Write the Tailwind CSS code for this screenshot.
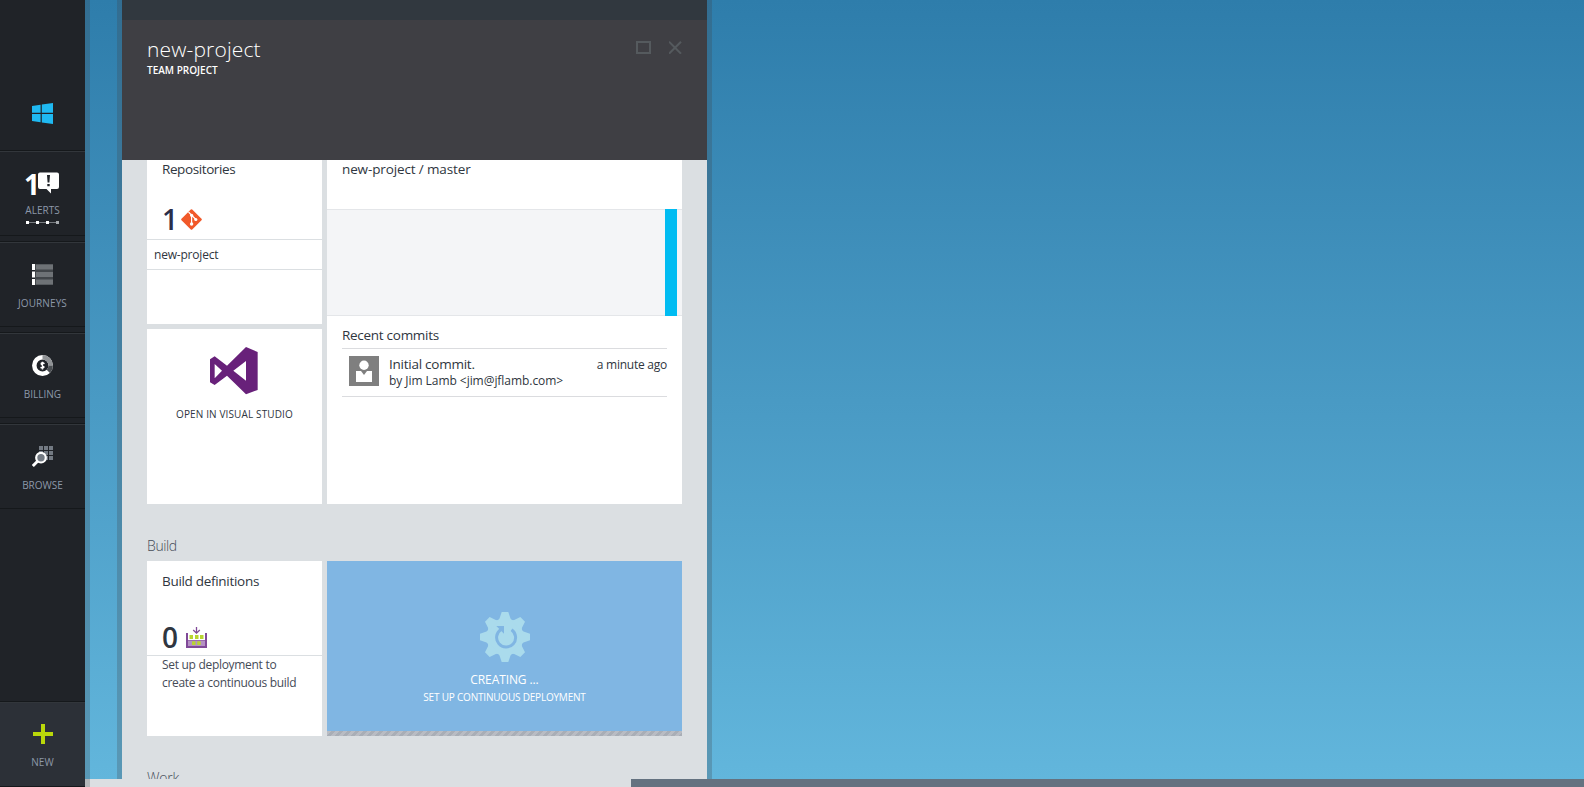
<!DOCTYPE html>
<html lang="en"><head><meta charset="utf-8"><title>new-project</title>
<script src="https://cdn.jsdelivr.net/npm/@tailwindcss/browser@4"></script></head>
<body class="flex h-[787px] w-[1584px] overflow-hidden bg-[#202328] font-['Open_Sans',sans-serif] text-[#2f3640] *:shrink-0">
<nav class="flex w-[85px] flex-col bg-[#202328] text-[10px] leading-[14px] text-[#8d98a8]">
  <div class="flex h-[150px] flex-col items-center pt-[103px]">
    <svg class="h-[21px] w-[21px]" viewBox="0 0 21 21" fill="#1fb9f2"><path d="M0 3.1 8.6 1.8V9.8H0ZM9.8 1.6 21 0V9.8H9.8ZM0 11H8.6V19.2L0 18ZM9.8 11H21V21L9.8 19.4Z"/></svg>
  </div>
  <div class="flex flex-col gap-[5px]">
    <div class="flex h-[86px] flex-col items-center border-y border-[#15181b] shadow-[inset_0_1px_#32363b]">
      <div class="mt-[21px] flex h-[23px] w-[33px] items-start">
        <b class="-ml-[2px] w-[14px] text-[28px] leading-[25px] font-bold tracking-[-3px] text-white">1</b>
        <svg class="h-[22px] w-[21px]" viewBox="0 0 21 22"><path fill="#fff" d="M2 .5H19Q21 .5 21 2.500V15Q21 17 19 17H13V21.500L8.500 17H2Q0 17 0 15V2.500Q0 .5 2 .5Z"/><path fill="#202328" d="M9 3H12L11.400 10.500H9.600ZM9.300 12H11.700V14.200H9.300Z"/></svg>
      </div>
      <span class="mt-[8px]">ALERTS</span>
      <svg class="mt-[4px] h-[3px] w-[33px]" viewBox="0 0 33 3"><path fill="#777b80" d="M0 1H33V2H0Z"/><path fill="#fff" d="M0 0H3V3H0ZM10 0H13V3H10ZM20 0H23V3H20Z"/><path fill="#a5a9ad" d="M30 0H33V3H30Z"/></svg>
    </div>
    <div class="flex h-[86px] flex-col items-center border-y border-[#15181b] shadow-[inset_0_1px_#32363b]">
      <svg class="mt-[22px] h-[21px] w-[21px]" viewBox="0 0 21 21"><path fill="#414549" d="M3 0H21V21H3Z"/><path fill="#6e7276" d="M4 .5H21V5.500H4ZM4 8H21V13H4ZM4 15.500H21V20.500H4Z"/><path fill="#fff" d="M0 0H3V6H0ZM0 7.500H3V13.500H0ZM0 15H3V21H0Z"/></svg>
      <span class="mt-[11px] tracking-[0.1px]">JOURNEYS</span>
    </div>
    <div class="flex h-[86px] flex-col items-center border-y border-[#15181b] shadow-[inset_0_1px_#32363b]">
      <svg class="mt-[22px] h-[21px] w-[21px]" viewBox="0 0 21 21" fill="none" stroke-width="4.500"><circle cx="10.500" cy="10.500" r="8.200" stroke="#fff"/><path stroke="#909396" d="M10.500 2.300A8.200 8.200 0 0 1 18.700 10.500"/><path stroke="#4b4f53" d="M18.700 10.500A8.200 8.200 0 0 1 16.300 16.300"/><path stroke="#fff" stroke-width="1.400" d="M12.500 8.700Q10.500 7.200 9.200 8.300C8.400 10 12.600 10.600 11.900 12.300Q10.500 13.700 8.500 12.400M10.500 6.700V14.500"/></svg>
      <span class="mt-[11px]">BILLING</span>
    </div>
    <div class="flex h-[86px] flex-col items-center border-y border-[#15181b] shadow-[inset_0_1px_#32363b]">
      <svg class="mt-[22px] h-[21px] w-[21px]" viewBox="0 0 21 21"><path fill="#737a83" d="M7 0H11V4H7ZM12 0H16V4H12ZM17 0H21V4H17ZM7 5H11V9H7ZM12 5H16V9H12ZM17 5H21V9H17ZM12 10H16V14H12ZM17 10H21V14H17Z"/><circle cx="9" cy="11.700" r="4.800" fill="#737a83" stroke="#fff" stroke-width="2.200"/><path stroke="#fff" stroke-width="3" d="M5.800 15 .8 20"/></svg>
      <span class="mt-[11px]">BROWSE</span>
    </div>
  </div>
  <div class="mt-auto flex h-[86px] flex-col items-center border-y border-[#15181b] bg-[#2c3037] shadow-[inset_0_1px_#32363b]">
    <svg class="mt-[22px] h-5 w-5" viewBox="0 0 20 20"><path fill="#bad80a" d="M8 0H12V8H20V12H12V20H8V12H0V8H8Z"/></svg>
    <span class="mt-[11px]">NEW</span>
  </div>
</nav>
<main class="relative flex w-[1499px] flex-col">
  <div class="flex h-[779px] bg-linear-to-b from-[#2e7dab] to-[#62b6dc] pl-8">
    <div class="w-[5px] bg-[#403f45]/25"></div>
    <section class="flex w-[585px] flex-col overflow-hidden bg-[#dbdfe2]">
      <div class="h-5 shrink-0 bg-[#31383f]"></div>
      <header class="flex h-[140px] shrink-0 justify-between bg-[#3f3f44] px-[25px] text-white">
        <div class="flex flex-col items-start pt-[15px]">
          <h1 class="text-[21px] leading-[28px] font-light tracking-[0.15px]">new-project</h1>
          <span class="text-[10px] leading-[14px] font-semibold">TEAM PROJECT</span>
        </div>
        <div class="mt-[21px] flex h-[13px] gap-[18px]">
          <svg class="h-[13px] w-[15px]" viewBox="0 0 15 13" fill="none"><path stroke="#555a5e" stroke-width="2" d="M1 1H14V12H1Z"/></svg>
          <svg class="h-[13px] w-[13px]" viewBox="0 0 13 13" fill="none"><path stroke="#555a5e" stroke-width="2" d="M0 .7 12 12.700M12 .7 0 12.700"/></svg>
        </div>
      </header>
      <div class="flex h-[344px] shrink-0 gap-[5px] px-[25px]">
        <div class="flex w-[175px] flex-col gap-[5px]">
          <div class="flex h-[164px] flex-col bg-white">
            <span class="mt-[1px] ml-[15px] self-start text-[13.5px] leading-[16px] tracking-[-0.4px]">Repositories</span>
            <div class="mt-[30px] ml-[15px] flex h-[32px]">
              <b class="w-[19px] shrink-0 text-[28px] leading-[25px] font-semibold text-[#2a2e4a]">1</b>
              <svg class="mt-[2px] h-[21px] w-[21px]" viewBox="0 0 21 21"><path fill="#f1592a" stroke="#f1592a" stroke-width="2" stroke-linejoin="round" d="M10.500 1.200 19.800 10.500 10.500 19.800 1.200 10.500Z"/><path stroke="#fff" stroke-width="1.200" fill="none" d="M7.500 3 10.600 6.200V15M10.600 6.200 15 10.500"/><g fill="#fff"><circle cx="10.600" cy="6.300" r="1.600"/><circle cx="10.600" cy="15" r="1.700"/><circle cx="14.800" cy="10.500" r="1.600"/></g></svg>
            </div>
            <div class="flex h-[31px] border-y border-[#dbdfe2] pl-[7px]"><span class="text-[12px] leading-[30px] tracking-[-0.2px]">new-project</span></div>
          </div>
          <div class="flex h-[175px] flex-col items-center bg-white">
            <svg class="mt-[18px] -ml-[1px] h-12 w-12" viewBox="0 0 144 144"><path fill="#68217a" fill-rule="evenodd" d="M0 37 14 28 51 56 108 0 143 15V129L108 142 51 86 14 114 0 106ZM14 51V94L36 71ZM108 42V101L70 71Z"/></svg>
            <span class="mt-[12px] text-[10px] leading-[15px] tracking-[0.13px]">OPEN IN VISUAL STUDIO</span>
          </div>
        </div>
        <div class="flex w-[355px] flex-col bg-white">
          <span class="mt-[1px] ml-[15px] self-start text-[13.5px] leading-[16px] tracking-[-0.13px]">new-project / master</span>
          <div class="mt-[32px] flex h-[107px] justify-end border-y border-[#e4e6e9] bg-[#f4f5f7] pr-[5px]"><div class="-my-px w-3 bg-[#00bcf2]"></div></div>
          <div class="mx-[15px] flex flex-col">
            <span class="mt-[10px] self-start text-[13.5px] leading-[18px] tracking-[-0.28px]">Recent commits</span>
            <div class="mt-[4px] flex h-[49px] border-y border-[#dbdcdf] pl-[7px]">
              <svg class="mt-[7px] h-[30px] w-[30px]" viewBox="0 0 30 30"><path fill="#7f7f7f" d="M0 0H30V30H0Z"/><circle cx="15" cy="9.200" r="4.700" fill="#fff"/><path fill="#fff" d="M7 15H12L15 19 18 15H23V26H7Z"/></svg>
              <div class="mt-[6px] ml-[10px] flex flex-col items-start">
                <span class="text-[13.5px] leading-[18px] tracking-[-0.25px]">Initial commit.</span>
                <span class="text-[12px] leading-[16px] tracking-[-0.05px]">by Jim Lamb &lt;jim@jflamb.com&gt;</span>
              </div>
              <span class="mt-[7px] ml-auto self-start text-[12px] leading-[18px] tracking-[-0.25px]">a minute ago</span>
            </div>
          </div>
        </div>
      </div>
      <h2 class="mt-[32px] ml-[25px] shrink-0 self-start text-[14px] leading-[19px] font-light tracking-[-0.4px] text-[#454c58]">Build</h2>
      <div class="mt-[6px] flex h-[175px] shrink-0 gap-[5px] px-[25px]">
        <div class="flex w-[175px] flex-col bg-white">
          <span class="mt-[12px] ml-[15px] self-start text-[13.5px] leading-[16px] tracking-[-0.3px]">Build definitions</span>
          <div class="mt-[36px] ml-[15px] flex h-[30px]">
            <b class="w-[24px] shrink-0 text-[28px] leading-[25px] font-semibold">0</b>
            <svg class="mt-[2px] h-[21px] w-[21px]" viewBox="0 0 21 21"><path fill="#b591c4" d="M2 13H19V19H2Z"/><path fill="#804998" d="M0 6H2V19H19V6H21V21H0ZM2 13H19V13.500H2Z"/><path fill="none" stroke="#804998" stroke-width="1.300" d="M10.500 0V6M7.200 3 10.500 6.200 13.800 3"/><path fill="#b8d432" d="M3.500 8H7V12H3.500ZM9 8H12.500V12H9ZM14 8H17.500V12H14ZM6 14.200H9.500V18H6ZM11.200 14.200H14.700V18H11.200Z"/></svg>
          </div>
          <div class="flex flex-col items-start border-t border-[#dbdfe2] pl-[15px] text-[12px] leading-[18px] tracking-[-0.3px] text-[#454b57]"><span>Set up deployment to</span><span>create a continuous build</span></div>
        </div>
        <div class="flex w-[355px] flex-col items-center bg-[#80b6e3] text-white">
          <svg class="mt-[51px] h-[50px] w-[50px]" viewBox="-25 -25 50 50"><g fill="#aadbec"><circle r="18.500"/><path id="tooth" d="M-7.500-16 -5.500-18.500 -3.300-25H3.300L5.500-18.500 7.500-16Z"/><use href="#tooth" transform="rotate(45)"/><use href="#tooth" transform="rotate(90)"/><use href="#tooth" transform="rotate(135)"/><use href="#tooth" transform="rotate(180)"/><use href="#tooth" transform="rotate(225)"/><use href="#tooth" transform="rotate(270)"/><use href="#tooth" transform="rotate(315)"/></g><path fill="none" stroke="#80b6e3" stroke-width="3" d="M6.500-7.300A9.500 9.500 0 1 1-4-7.500"/><path fill="#80b6e3" d="M-8.700-11H-1V-3.300Z"/></svg>
          <span class="mt-[8px] text-[12px] leading-[19px] tracking-[-0.1px]">CREATING ...</span>
          <span class="mt-[1px] text-[10px] leading-[15px] font-medium tracking-[-0.2px]">SET UP CONTINUOUS DEPLOYMENT</span>
          <div class="mt-auto h-[5px] w-full bg-[repeating-linear-gradient(135deg,#b9bcc3_0_2.83px,#a9aeb6_2.83px_5.66px)]"></div>
        </div>
      </div>
      <h2 class="mt-[32px] ml-[25px] shrink-0 self-start text-[14px] leading-[19px] font-light tracking-[-0.2px] text-[#454c58]">Work</h2>
    </section>
    <div class="w-[5px] bg-[#403f45]/25"></div>
  </div>
  <div class="h-2 bg-[#647280]"><div class="h-2 w-[546px] bg-[#dbdfe2]"></div></div>
  <div class="absolute top-0 left-0 h-full w-[5px] bg-[#403f45]/25"></div>
</main>
</body></html>
